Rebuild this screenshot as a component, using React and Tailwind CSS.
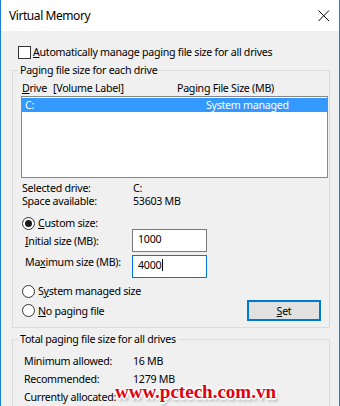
import React from "react";

const Radio = ({ checked }) => (
  <span className="w-[13px] h-[13px] rounded-full border border-[#333333] bg-white flex items-center justify-center shrink-0">
    {checked && <span className="w-[7px] h-[7px] rounded-full bg-[#1a1a1a]"></span>}
  </span>
);

const App = () => {
  return (
    <div className="relative w-[340px] h-[406px] overflow-hidden bg-[#f0f0f0] border-x border-[#1a7fd4] text-black text-[10.67px] tracking-[-0.28px] font-['Noto_Sans',sans-serif]">
      {/* title bar */}
      <div className="h-[31px] bg-white flex items-start justify-between pt-[8px] pl-[8px] pr-[9px]">
        <span className="leading-[16px] text-[12px] tracking-[-0.43px]">Virtual Memory</span>
        <svg className="mt-[2px]" width="12" height="12" viewBox="0 0 12 12">
          <path d="M0.5 0.5 L11 11 M11 0.5 L0.5 11" stroke="#000" strokeWidth="1" fill="none" />
        </svg>
      </div>

      <div className="pl-[11px] pr-[9px]">
        {/* auto manage */}
        <div className="mt-[13px] ml-[6px] h-[16px] flex items-center leading-[16px]">
          <span className="w-[13px] h-[13px] border border-[#333333] bg-white shrink-0"></span>
          <span className="ml-[2px]">
            <u>A</u>utomatically manage paging file size for all drives
          </span>
        </div>

        {/* paging file size for each drive */}
        <fieldset className="mt-[3px] border border-[#dcdcdc] pl-[9px] pr-[1px] pt-[2px] pb-[6px]">
          <legend className="ml-[-4px] px-[2px] leading-[15px]">Paging file size for each drive</legend>

          <div className="flex h-[16px] leading-[16px]">
            <span className="w-[31px]">
              <u>D</u>rive
            </span>
            <span className="w-[124px]">[Volume Label]</span>
            <span>Paging File Size (MB)</span>
          </div>

          <div className="ml-[-1px] w-[307px] h-[82px] border border-[#828790] bg-white pt-[1px]">
            <div className="h-[14px] leading-[14px] bg-[#3399ff] text-white flex">
              <span className="w-[184px] pl-[3px]">C:</span>
              <span>System managed</span>
            </div>
          </div>

          <div className="mt-[4px] leading-[13px]">
            <div className="flex h-[13px]">
              <span className="w-[111px]">Selected drive:</span>
              <span>C:</span>
            </div>
            <div className="flex h-[13px]">
              <span className="w-[111px]">Space available:</span>
              <span>53603 MB</span>
            </div>
          </div>

          <div className="mt-[8px] h-[14px] flex items-center leading-[14px]">
            <Radio checked />
            <span className="ml-[3px]">
              <u>C</u>ustom size:
            </span>
          </div>

          <div className="mt-[-1px] h-[23px] flex items-start">
            <span className="ml-[3px] w-[107px] mt-[4px] leading-[16px]">
              <u>I</u>nitial size (MB):
            </span>
            <div className="w-[75px] h-[23px] border border-[#7a7a7a] bg-white pl-[5px] pt-[1px] leading-[16px]">
              1000
            </div>
          </div>

          <div className="mt-[3px] h-[23px] flex items-start">
            <span className="ml-[3px] w-[107px] mt-[-1px] leading-[16px]">
              Ma<u>x</u>imum size (MB):
            </span>
            <div className="w-[75px] h-[23px] border border-[#0078d7] bg-white pl-[5px] pt-[1px] leading-[16px] flex items-start">
              <span>4000</span>
              <span className="ml-[1px] mt-[2px] w-[1px] h-[12px] bg-black"></span>
            </div>
          </div>

          <div className="mt-[6px] h-[14px] flex items-center leading-[14px]">
            <Radio />
            <span className="ml-[3px]">
              S<u>y</u>stem managed size
            </span>
          </div>

          <div className="mt-[2px] h-[21px] flex items-center justify-between">
            <div className="h-[14px] flex items-center leading-[14px]">
              <Radio />
              <span className="ml-[3px]">
                <u>N</u>o paging file
              </span>
            </div>
            <button className="mr-[7px] w-[74px] h-[21px] border-2 border-[#0078d7] bg-[#e1e1e1] leading-[16px] flex items-center justify-center">
              <span>
                <u>S</u>et
              </span>
            </button>
          </div>
        </fieldset>

        {/* totals */}
        <fieldset className="mt-[4px] border border-[#dcdcdc] pl-[9px] pr-[1px] pt-[5px] pb-[10px]">
          <legend className="ml-[-4px] px-[2px] leading-[15px]">Total paging file size for all drives</legend>
          <div className="ml-[2px] leading-[18px]">
            <div className="flex h-[18px]">
              <span className="w-[109px]">Minimum allowed:</span>
              <span>16 MB</span>
            </div>
            <div className="flex h-[18px]">
              <span className="w-[109px]">Recommended:</span>
              <span>1279 MB</span>
            </div>
            <div className="flex h-[18px]">
              <span className="w-[109px]">Currently allocated:</span>
            </div>
          </div>
        </fieldset>
      </div>

      {/* watermark */}
      <div className="absolute left-[114px] top-[382px] text-[19px] leading-[19px] font-bold tracking-normal text-[#e3000f] font-['Liberation_Serif',serif] [text-shadow:1px_1px_0_#fff,-1px_-1px_0_#fff,1px_-1px_0_#fff,-1px_1px_0_#fff,0_2px_0_#fff,2px_0_0_#fff,0_0_4px_#fff,2px_3px_3px_rgba(0,0,0,0.35)]">
        www.pctech.com.vn
      </div>
    </div>
  );
};

export default App;
